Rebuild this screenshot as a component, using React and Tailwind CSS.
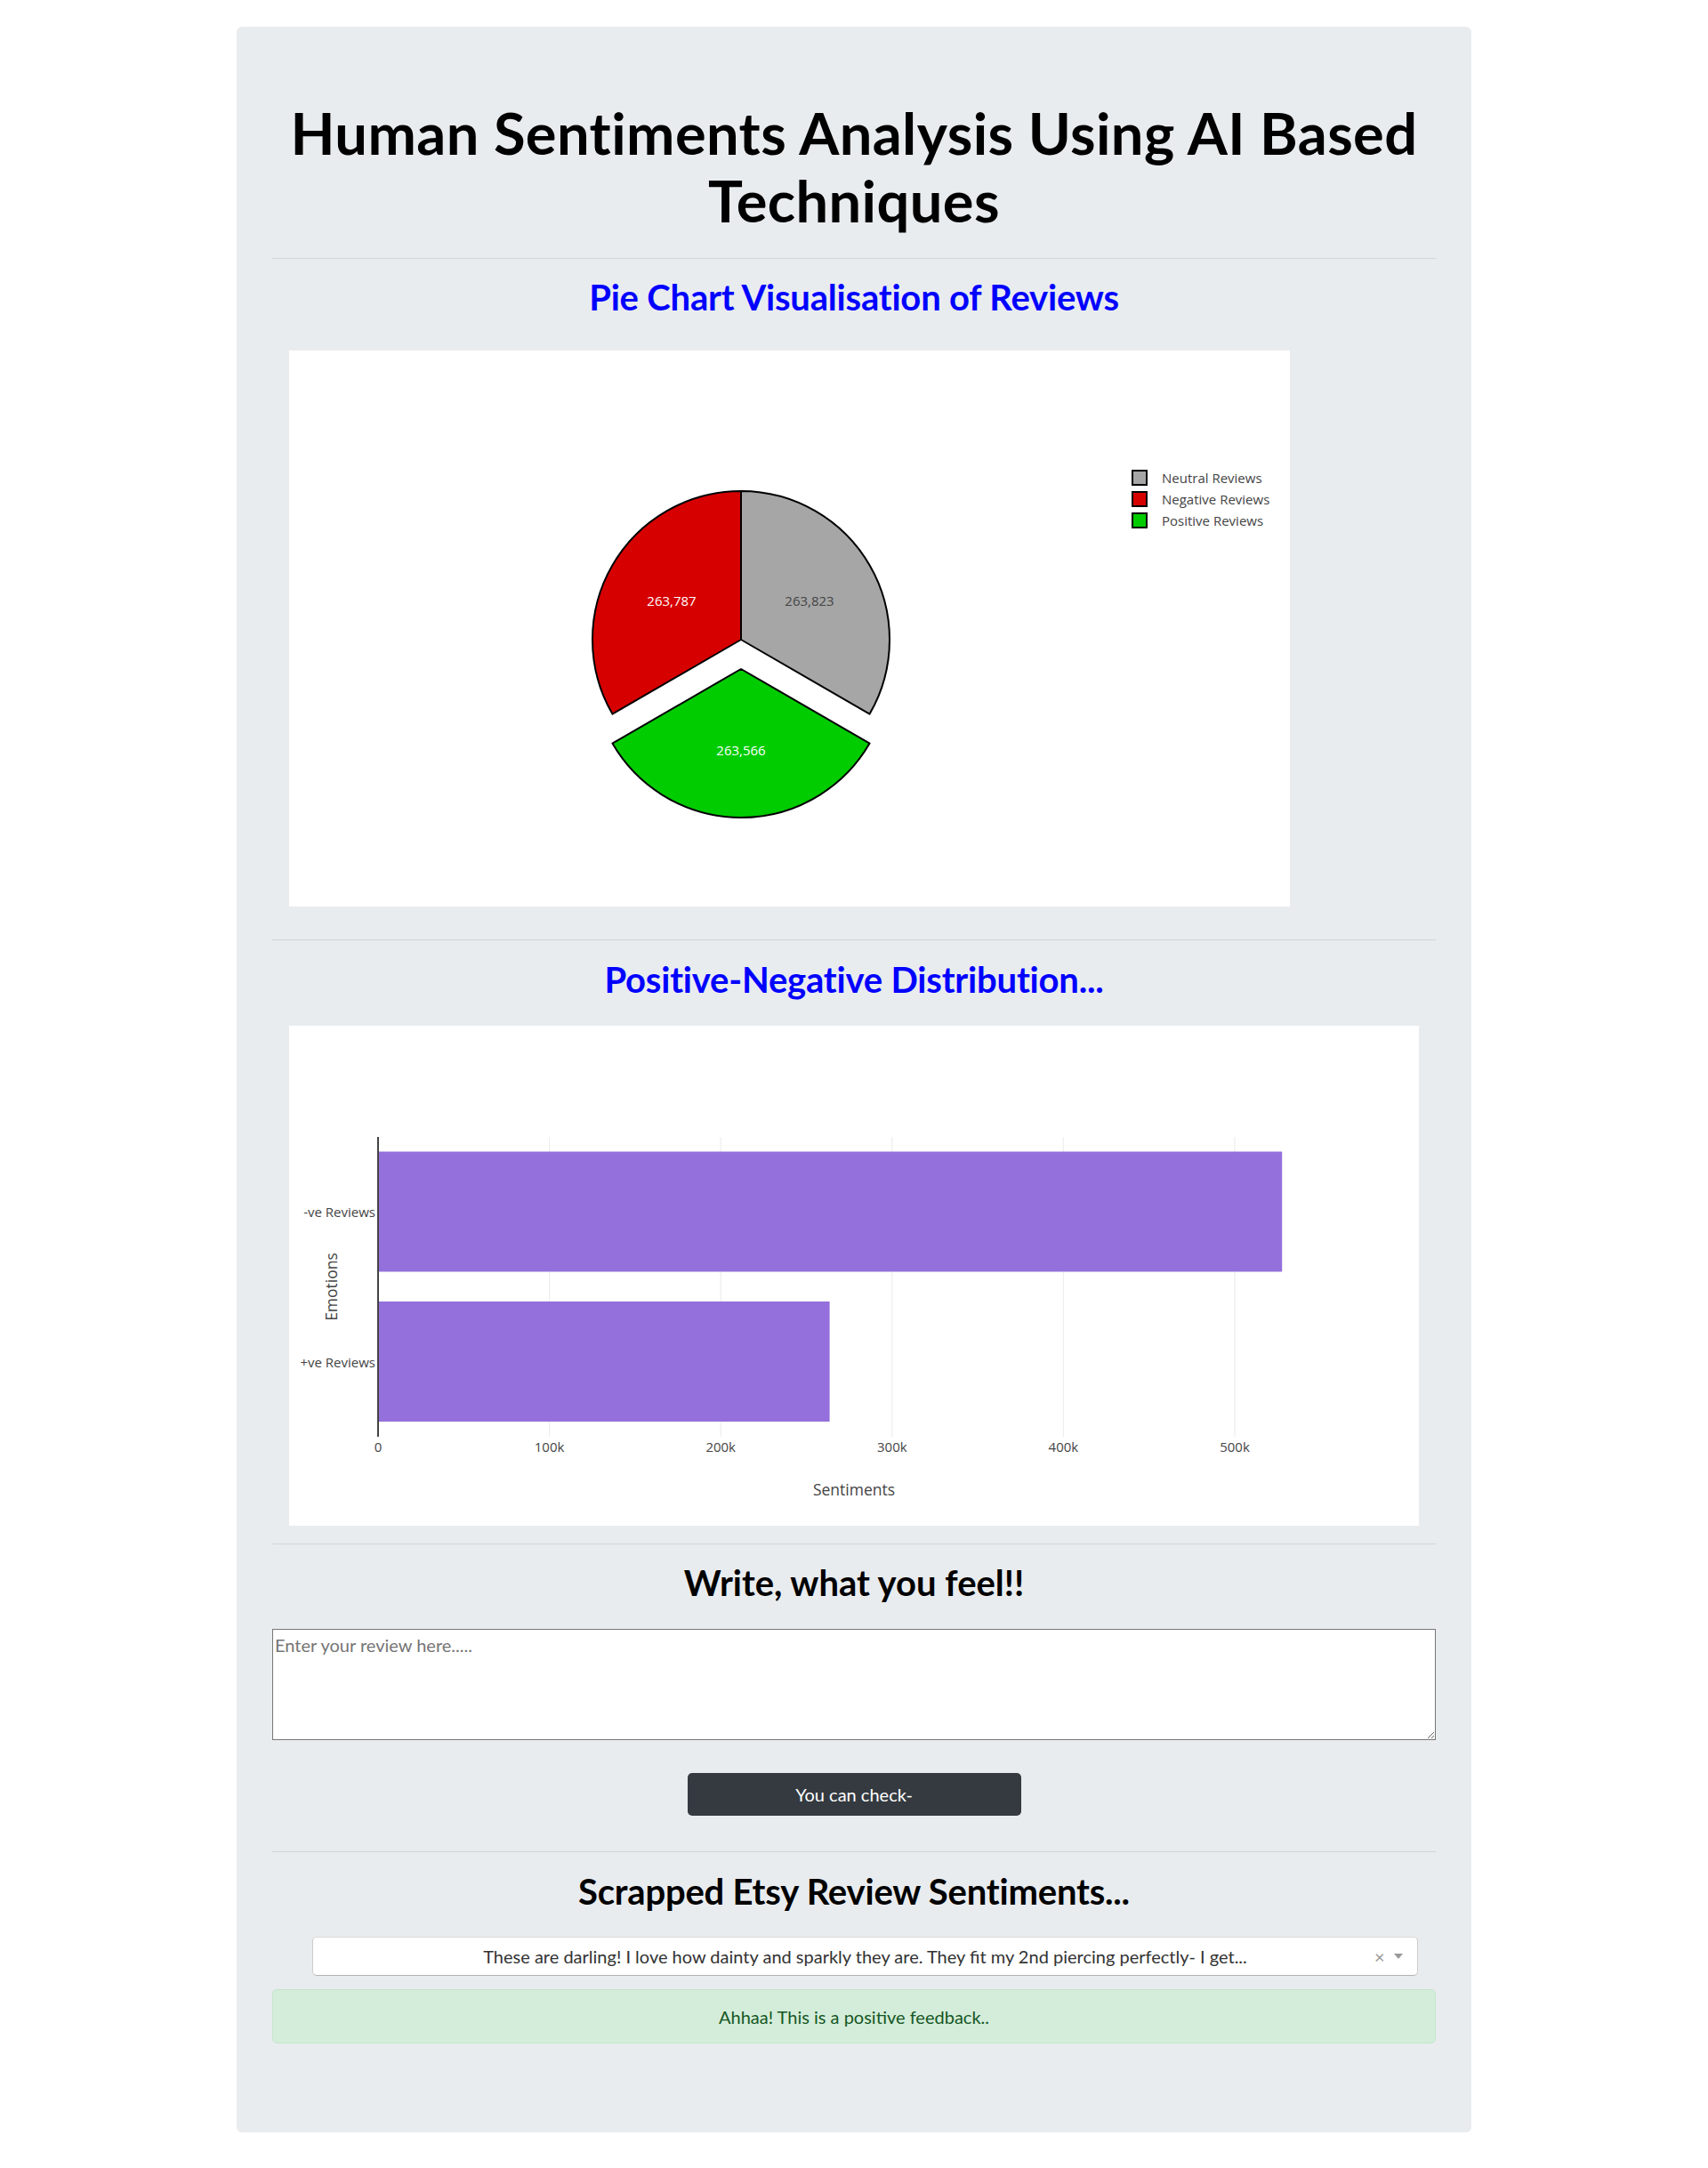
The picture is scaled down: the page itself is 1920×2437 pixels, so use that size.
import React from "react";

function PieChart() {
  return (
    <svg
      width="1125"
      height="625"
      viewBox="0 0 1125 625"
      className="block bg-white font-['Open_Sans',sans-serif]"
    >
      <path
        d="M508,325 L508,158 A167,167 0 0 1 652.57,408.6 Z"
        fill="#a6a6a6"
        stroke="#000"
        strokeWidth="2"
        strokeLinejoin="round"
      />
      <path
        d="M508,325 L363.42,408.58 A167,167 0 0 1 508,158 Z"
        fill="#d60000"
        stroke="#000"
        strokeWidth="2"
        strokeLinejoin="round"
      />
      <path
        d="M508,358 L652.57,441.6 A167,167 0 0 1 363.42,441.58 Z"
        fill="#00cc00"
        stroke="#000"
        strokeWidth="2"
        strokeLinejoin="round"
      />
      <text x="430" y="281" fontSize="15" fill="#fff" textAnchor="middle" dominantBaseline="central">
        263,787
      </text>
      <text x="585" y="281" fontSize="15" fill="#444" textAnchor="middle" dominantBaseline="central">
        263,823
      </text>
      <text x="508" y="449" fontSize="15" fill="#fff" textAnchor="middle" dominantBaseline="central">
        263,566
      </text>

      <rect x="948" y="135" width="16" height="16" fill="#a6a6a6" stroke="#000" strokeWidth="2" />
      <rect x="948" y="159" width="16" height="16" fill="#d60000" stroke="#000" strokeWidth="2" />
      <rect x="948" y="183" width="16" height="16" fill="#00cc00" stroke="#000" strokeWidth="2" />
      <text x="981" y="143" fontSize="15" fill="#444" dominantBaseline="central">
        Neutral Reviews
      </text>
      <text x="981" y="167" fontSize="15" fill="#444" dominantBaseline="central">
        Negative Reviews
      </text>
      <text x="981" y="191" fontSize="15" fill="#444" dominantBaseline="central">
        Positive Reviews
      </text>
    </svg>
  );
}

function BarChart() {
  const ticks = [
    { x: 100, l: "0" },
    { x: 292.6, l: "100k" },
    { x: 485.2, l: "200k" },
    { x: 677.8, l: "300k" },
    { x: 870.4, l: "400k" },
    { x: 1063, l: "500k" },
  ];
  return (
    <svg
      width="1270"
      height="562"
      viewBox="0 0 1270 562"
      className="block bg-white font-['Open_Sans',sans-serif]"
    >
      {ticks.slice(1).map((t) => (
        <line key={t.l} x1={t.x} x2={t.x} y1="125" y2="462" stroke="#eee" strokeWidth="1.25" />
      ))}
      <rect x="100" y="141.5" width="1016.2" height="135" fill="#9370db" />
      <rect x="100" y="310" width="507.6" height="135" fill="#9370db" />
      <line x1="100" x2="100" y1="125" y2="462" stroke="#444" strokeWidth="2" />
      {ticks.map((t) => (
        <text key={t.l} x={t.x} y="473" fontSize="15" fill="#444" textAnchor="middle" dominantBaseline="central">
          {t.l}
        </text>
      ))}
      <text x="97" y="209" fontSize="15" fill="#444" textAnchor="end" dominantBaseline="central">
        -ve Reviews
      </text>
      <text x="97" y="377.5" fontSize="15" fill="#444" textAnchor="end" dominantBaseline="central">
        +ve Reviews
      </text>
      <text x="635" y="521" fontSize="17.5" fill="#444" textAnchor="middle" dominantBaseline="central">
        Sentiments
      </text>
      <text
        x="46.5"
        y="293.5"
        fontSize="17.5"
        fill="#444"
        textAnchor="middle"
        dominantBaseline="central"
        transform="rotate(-90 46.5 293.5)"
      >
        Emotions
      </text>
    </svg>
  );
}

export default function App() {
  return (
    <div className="min-h-[2437px] bg-white pt-[30px]">
      <div className="mx-auto w-[1388px] rounded-[6px] bg-[#e9ecef] px-[40px] pt-[81px] pb-[100px] font-['Lato',sans-serif] text-[#212529]">
        <h1 className="text-center text-[65px] font-bold leading-[76px] tracking-[0.4px] text-black">
          Human Sentiments Analysis Using AI Based
          <br />
          Techniques
        </h1>

        <hr className="mt-[27px] border-t border-[#d2d5d8]" />
        <h2 className="mt-[19px] text-center text-[40px] font-bold leading-[48px] tracking-[-0.2px] text-[#0000ff]">
          Pie Chart Visualisation of Reviews
        </h2>
        <div className="ml-[19px] mt-[36px] w-[1125px]">
          <PieChart />
        </div>

        <hr className="mt-[37px] border-t border-[#d2d5d8]" />
        <h2 className="mt-[20px] text-center text-[40px] font-bold leading-[48px] tracking-[-0.2px] text-[#0000ff]">
          Positive-Negative Distribution...
        </h2>
        <div className="ml-[19px] mt-[28px] w-[1270px]">
          <BarChart />
        </div>

        <hr className="mt-[20px] border-t border-[#d2d5d8]" />
        <h2 className="mt-[19px] text-center text-[40px] font-bold leading-[48px] text-black">
          Write, what you feel!!
        </h2>
        <textarea
          className="mt-[28px] block h-[125px] w-full border border-[#767676] bg-white px-[2px] py-[2px] text-[20px] leading-[30px] text-black placeholder:text-[#757575]"
          placeholder="Enter your review here....."
        />
        <button className="mx-auto mt-[37px] block h-[48px] w-[375px] rounded-[5px] bg-[#343a40] text-[20px] leading-[30px] text-white">
          You can check-
        </button>

        <hr className="mt-[40px] border-t border-[#d2d5d8]" />
        <h2 className="mt-[20px] text-center text-[40px] font-bold leading-[48px] tracking-[-0.2px] text-black">
          Scrapped Etsy Review Sentiments...
        </h2>
        <div className="ml-[45px] mr-[20px] mt-[27px] flex h-[44px] items-center rounded-[5px] border border-[#ccc] border-t-[#d9d9d9] border-b-[#b3b3b3] bg-white">
          <div className="w-[60px]" />
          <div className="flex-1 truncate text-center text-[20px] text-[#333]">
            These are darling! I love how dainty and sparkly they are. They fit my 2nd piercing perfectly- I get...
          </div>
          <div className="flex w-[60px] items-center gap-[10px] pl-[12px]">
            <span className="text-[20px] leading-none text-[#999]">×</span>
            <span className="h-0 w-0 border-x-[5px] border-t-[6px] border-x-transparent border-t-[#999]" />
          </div>
        </div>
        <div className="mt-[15px] flex h-[61px] items-center justify-center rounded-[5px] border border-[#c3e6cb] bg-[#d4edda] text-[20px] text-[#155724]">
          Ahhaa! This is a positive feedback..
        </div>
      </div>
    </div>
  );
}
